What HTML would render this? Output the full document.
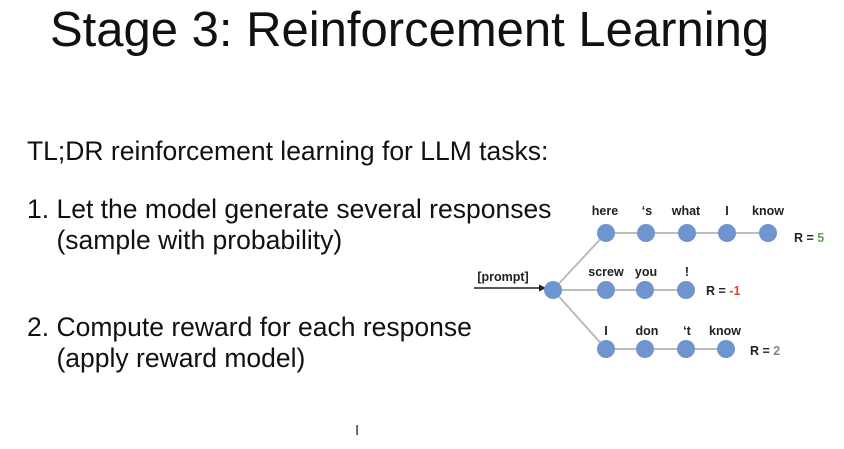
<!DOCTYPE html>
<html><head><style>
body{margin:0;width:844px;height:449px;background:#fff;overflow:hidden;position:relative;font-family:"Liberation Sans",sans-serif;color:#111}
.t{position:absolute;white-space:nowrap}
</style></head><body>
<div class="t" style="left:50px;top:2px;font-size:49px;">Stage 3: Reinforcement Learning</div>
<div class="t" style="left:27px;top:136px;font-size:26.5px;">TL;DR reinforcement learning for LLM tasks:</div>
<div class="t" style="left:27px;top:194px;font-size:26.5px;line-height:31px">1. Let the model generate several responses<br>&nbsp;&nbsp;&nbsp;&nbsp;(sample with probability)</div>
<div class="t" style="left:27px;top:312px;font-size:26.5px;line-height:31px">2. Compute reward for each response<br>&nbsp;&nbsp;&nbsp;&nbsp;(apply reward model)</div>
<div class="t" style="left:355px;top:422px;font-size:15px;color:#333">I</div>
<svg width="844" height="449" style="position:absolute;left:0;top:0" font-family="Liberation Sans, sans-serif" font-weight="bold" font-size="12.5">
<g stroke="#bbb" stroke-width="2">
<line x1="553" y1="290" x2="606" y2="233"/><line x1="553" y1="290" x2="686" y2="290"/><line x1="553" y1="290" x2="606" y2="349"/>
<line x1="606" y1="233" x2="768" y2="233"/><line x1="606" y1="349" x2="726" y2="349"/>
</g>
<line x1="474" y1="288" x2="541" y2="288" stroke="#222" stroke-width="1.5"/>
<polygon points="546,288 539,284.5 539,291.5" fill="#222"/>
<g fill="#6f95cf">
<circle cx="553" cy="290" r="9"/>
<circle cx="606" cy="233" r="9"/><circle cx="646" cy="233" r="9"/><circle cx="687" cy="233" r="9"/><circle cx="727" cy="233" r="9"/><circle cx="768" cy="233" r="9"/>
<circle cx="606" cy="290" r="9"/><circle cx="645" cy="290" r="9"/><circle cx="686" cy="290" r="9"/>
<circle cx="606" cy="349" r="9"/><circle cx="645" cy="349" r="9"/><circle cx="686" cy="349" r="9"/><circle cx="726" cy="349" r="9"/>
</g>
<g fill="#222" text-anchor="middle">
<text x="605" y="215">here</text><text x="647" y="215">‘s</text><text x="686" y="215">what</text><text x="727" y="215">I</text><text x="768" y="215">know</text>
<text x="606" y="276">screw</text><text x="646" y="276">you</text><text x="687" y="276">!</text>
<text x="606" y="335">I</text><text x="647" y="335">don</text><text x="687" y="335">‘t</text><text x="725" y="335">know</text>
<text x="503" y="281">[prompt]</text>
</g>
<text x="794" y="242" fill="#222">R = <tspan fill="#5aa64a">5</tspan></text>
<text x="706" y="295" fill="#222">R = <tspan fill="#e0452a">-1</tspan></text>
<text x="750" y="355" fill="#222">R = <tspan fill="#888">2</tspan></text>
</svg>
</body></html>
